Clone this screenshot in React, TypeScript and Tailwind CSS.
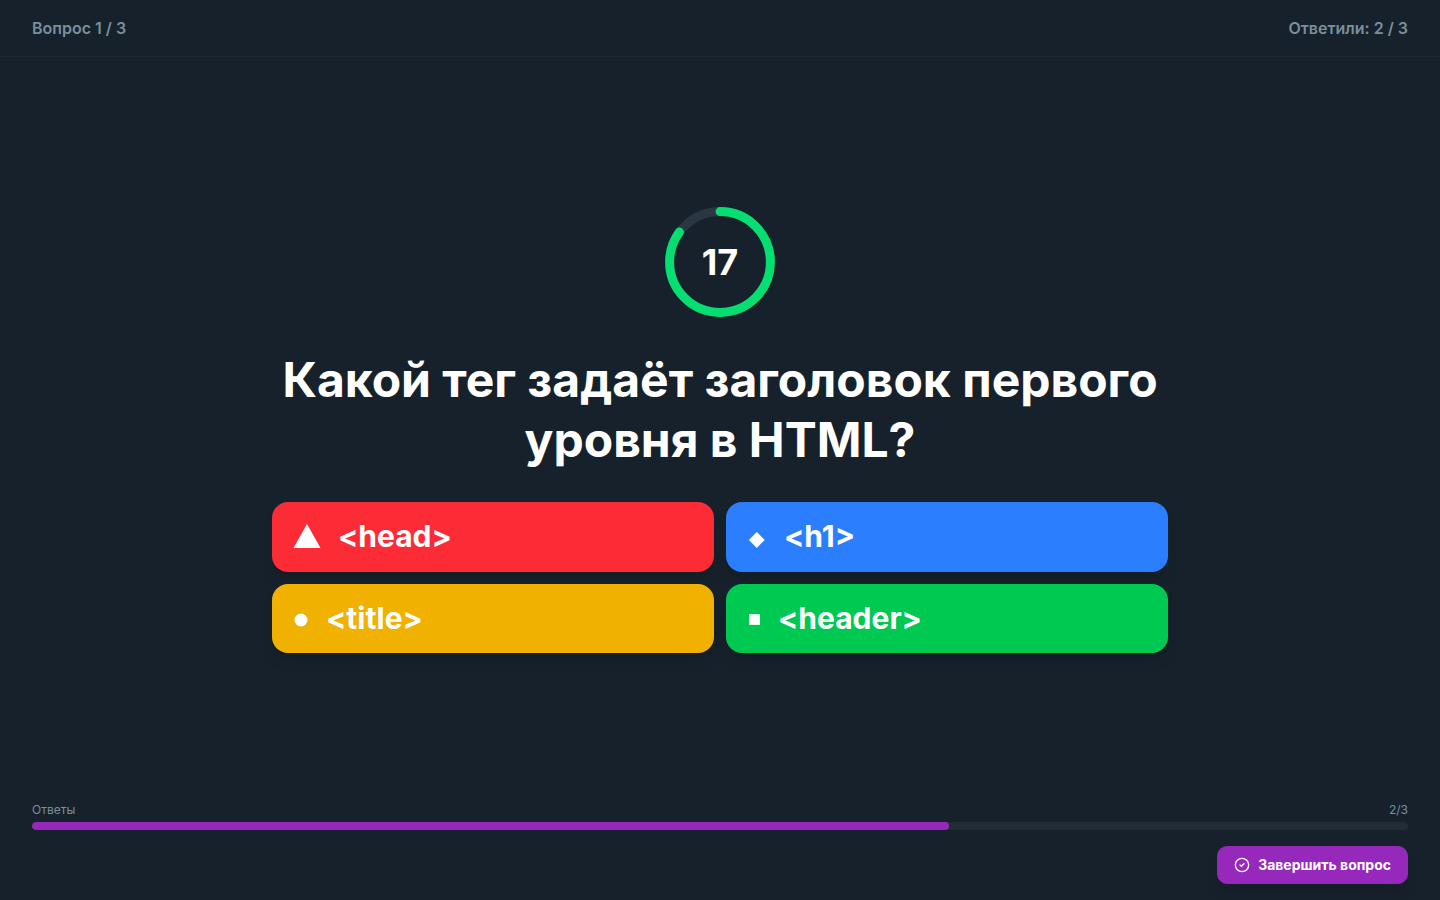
import { CircleCheck } from "lucide-react";
import clsx from "clsx";

interface Answer {
  id: string;
  shape: "triangle" | "diamond" | "circle" | "square";
  text: string;
  color: string;
}

const ANSWERS: Answer[] = [
  { id: "a", shape: "triangle", text: "<head>", color: "bg-red-500" },
  { id: "b", shape: "diamond", text: "<h1>", color: "bg-blue-500" },
  { id: "c", shape: "circle", text: "<title>", color: "bg-yellow-500" },
  { id: "d", shape: "square", text: "<header>", color: "bg-green-500" },
];

const TIME_LIMIT = 20;

function AnswerShape({ shape }: { shape: Answer["shape"] }) {
  switch (shape) {
    case "triangle":
      return (
        <svg width="30" height="36" fill="currentColor" aria-hidden="true">
          <path d="M15 5 28.5 29H1.5Z" />
        </svg>
      );
    case "diamond":
      return (
        <svg width="22" height="36" fill="currentColor" aria-hidden="true">
          <path d="M10.8 12.9 18.7 20.9 10.8 28.9 2.9 20.9Z" />
        </svg>
      );
    case "circle":
      return (
        <svg width="18" height="36" fill="currentColor" aria-hidden="true">
          <circle cx="9" cy="20" r="6.5" />
        </svg>
      );
    case "square":
      return (
        <svg width="16" height="36" fill="currentColor" aria-hidden="true">
          <rect x="3.1" y="14.1" width="10.8" height="10.8" />
        </svg>
      );
  }
}

function CountdownRing({ seconds }: { seconds: number }) {
  const radius = 45;
  const length = 2 * Math.PI * radius;

  return (
    <div className="relative flex h-28 w-28 items-center justify-center">
      <svg viewBox="0 0 100 100" className="absolute inset-0 h-full w-full -rotate-90" aria-hidden="true">
        <circle cx="50" cy="50" r={radius} fill="none" strokeWidth="8" className="stroke-[#2a3641]" />
        <circle
          cx="50"
          cy="50"
          r={radius}
          fill="none"
          strokeWidth="8"
          strokeLinecap="round"
          strokeDasharray={length}
          strokeDashoffset={length * (1 - seconds / TIME_LIMIT)}
          className="stroke-[#05df72]"
        />
      </svg>
      <span className="relative text-4xl font-bold">{seconds}</span>
    </div>
  );
}

export default function App() {
  const question = 1;
  const totalQuestions = 3;
  const answered = 2;
  const players = 3;

  return (
    <div className="flex min-h-screen flex-col bg-[#17212b] font-['Inter',sans-serif] text-white">
      <header className="flex items-center justify-between border-b border-[#1d2831] px-8 py-4 font-semibold text-[#78909c]">
        <span>
          Вопрос {question} / {totalQuestions}
        </span>
        <span>
          Ответили: {answered} / {players}
        </span>
      </header>

      <main className="flex flex-1 flex-col items-center justify-center px-8">
        <div className="flex w-full max-w-4xl flex-col items-center">
          <CountdownRing seconds={17} />
          <h1 className="mt-8 text-center text-5xl leading-tight font-bold">
            Какой тег задаёт заголовок первого уровня в HTML?
          </h1>
          <div className="mt-8 grid w-full grid-cols-2 gap-3">
            {ANSWERS.map((answer) => (
              <button
                key={answer.id}
                type="button"
                className={clsx(
                  "flex items-center gap-4 rounded-2xl px-5 py-4 text-left text-3xl leading-tight font-bold shadow-lg",
                  answer.color
                )}
              >
                <AnswerShape shape={answer.shape} />
                <span>{answer.text}</span>
              </button>
            ))}
          </div>
        </div>
      </main>

      <footer className="px-8 pb-4">
        <div className="flex justify-between text-xs text-[#78909c]">
          <span>Ответы</span>
          <span>
            {answered}/{players}
          </span>
        </div>
        <div className="mt-1 h-2 overflow-hidden rounded-full bg-[#222c35]">
          <div
            className="h-full rounded-full bg-[#9629bb]"
            style={{ width: `${(answered / players) * 100}%` }}
          />
        </div>
        <div className="mt-4 flex justify-end">
          <button
            type="button"
            className="flex items-center gap-2 rounded-[10px] border border-[#9629bb] bg-[#9629bb] px-4 py-2 text-sm font-bold shadow-lg"
          >
            <CircleCheck className="h-4 w-4" strokeWidth={2} />
            Завершить вопрос
          </button>
        </div>
      </footer>
    </div>
  );
}
